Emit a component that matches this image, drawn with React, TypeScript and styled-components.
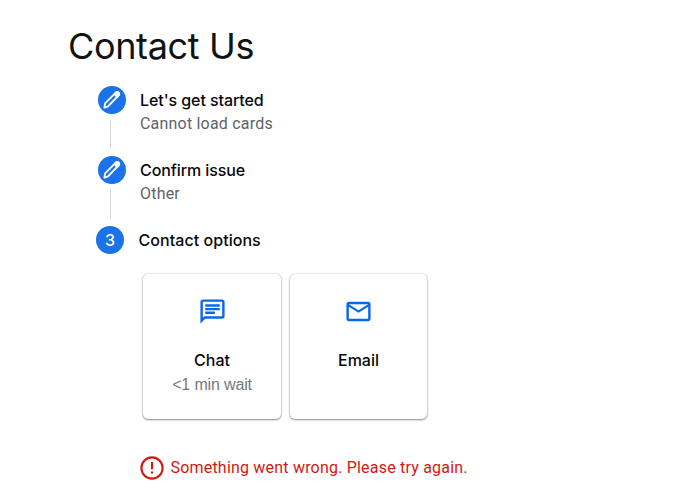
import React from "react";
import styled, { createGlobalStyle } from "styled-components";

const GlobalStyle = createGlobalStyle`
  * { box-sizing: border-box; }
  body { margin: 0; background: #fff; font-family: Roboto, "Liberation Sans", sans-serif; }
`;

const Page = styled.main`
  width: 690px;
  height: 489px;
  padding: 22px 0 0 68px;
  overflow: hidden;
`;

const Title = styled.h1`
  margin: 0;
  height: 64px;
  font: 400 36px/48px Inter, sans-serif;
  letter-spacing: -0.35px;
  color: #111214;
`;

const Steps = styled.ol`
  list-style: none;
  margin: 0;
  padding: 0;
`;

const Step = styled.li<{ $current?: boolean }>`
  display: flex;
  gap: ${(p) => (p.$current ? 14.5 : 14)}px;
  height: ${(p) => (p.$current ? 48 : 70)}px;
  margin-left: ${(p) => (p.$current ? 28 : 30)}px;
`;

const Rail = styled.div`
  display: flex;
  flex-direction: column;
  width: 28px;
`;

const Badge = styled.span`
  display: flex;
  align-items: center;
  justify-content: center;
  width: 28px;
  height: 28px;
  border-radius: 50%;
  background: #1a73e8;
  color: #fff;
  font: 500 16px/28px Inter, sans-serif;
`;

const Connector = styled.span`
  width: 1px;
  height: 28px;
  margin: 6px 0 0 12px;
  background: #d3d5d8;
`;

const Label = styled.div<{ $spacing?: number }>`
  font: 500 16px/24px Inter, sans-serif;
  letter-spacing: ${(p) => p.$spacing ?? 0}px;
  color: #08090a;
  white-space: nowrap;
`;

const StepText = styled.div`
  padding-top: 2px;
`;

const Detail = styled.div<{ $spacing?: number }>`
  font-size: 16px;
  line-height: 23px;
  letter-spacing: ${(p) => p.$spacing ?? 0}px;
  color: #5f6368;
  white-space: nowrap;
`;

const Options = styled.div`
  display: flex;
  gap: 9px;
  margin-left: 75px;
`;

const Card = styled.button<{ $width: number }>`
  display: flex;
  flex-direction: column;
  align-items: center;
  width: ${(p) => p.$width}px;
  height: 145px;
  padding: 23px 0 0;
  border: 0;
  border-radius: 5px;
  background: #fff;
  box-shadow: 0 1px 2px rgba(0, 0, 0, 0.42), 0 0 2px rgba(0, 0, 0, 0.25);

  svg { margin-bottom: 22px; }
`;

const WaitTime = styled.div`
  font: 16px/25px "Liberation Sans", sans-serif;
  letter-spacing: -0.15px;
  color: #75797e;
`;

const ErrorLine = styled.div`
  display: flex;
  align-items: center;
  gap: 6.5px;
  height: 28px;
  margin: 35px 0 0 72px;
  font-size: 16px;
  line-height: 20px;
  letter-spacing: 0.2px;
  color: #d2180f;
`;

const ErrorText = styled.span`
  padding-bottom: 1px;
`;

const PencilIcon = () => (
  <svg width="28" height="28" viewBox="0 0 28 28" fill="none" stroke="#fff" strokeWidth="1.9" strokeLinejoin="round">
    <path d="M6.4 21.6l.7-4.2L17.8 6.7q1.3-1.3 2.7 0 1.4 1.4 0 2.8L10 20.3z" />
    <path d="M16.4 8.1l1.4-1.4q1.3-1.3 2.7 0 1.4 1.4 0 2.8l-1.3 1.4z" fill="#fff" />
  </svg>
);

const ChatIcon = () => (
  <svg width="29" height="29" viewBox="0 0 24 24" fill="#0b66ea">
    <path d="M4 4h16v12H5.17L4 17.17V4m0-2c-1.1 0-1.99.9-1.99 2L2 22l4-4h14c1.1 0 2-.9 2-2V4c0-1.1-.9-2-2-2H4zm2 10h8v2H6v-2zm0-3h12v2H6V9zm0-3h12v2H6V6z" />
  </svg>
);

const MailIcon = () => (
  <svg width="29" height="29" viewBox="0 0 24 24" fill="#0b66ea">
    <path d="M22 6c0-1.1-.9-2-2-2H4c-1.1 0-2 .9-2 2v12c0 1.1.9 2 2 2h16c1.1 0 2-.9 2-2V6zm-2 0-8 5-8-5h16zm0 12H4V8l8 5 8-5v10z" />
  </svg>
);

const AlertIcon = () => (
  <svg width="24" height="24" viewBox="0 0 24 24" fill="none" stroke="#d2180f" strokeWidth="2.1">
    <circle cx="12" cy="12" r="10.6" />
    <path d="M12 6v7.2M12 15.4v2.2" />
  </svg>
);

const completed = [
  { label: "Let's get started", detail: "Cannot load cards", spacing: -0.08, detailSpacing: 0.2 },
  { label: "Confirm issue", detail: "Other", spacing: -0.1, detailSpacing: 0.2 },
];

export default function App() {
  return (
    <Page>
      <GlobalStyle />
      <Title>Contact Us</Title>
      <Steps>
        {completed.map((s) => (
          <Step key={s.label}>
            <Rail>
              <Badge><PencilIcon /></Badge>
              <Connector />
            </Rail>
            <StepText>
              <Label $spacing={s.spacing}>{s.label}</Label>
              <Detail $spacing={s.detailSpacing}>{s.detail}</Detail>
            </StepText>
          </Step>
        ))}
        <Step $current>
          <Rail><Badge>3</Badge></Rail>
          <StepText><Label $spacing={0.05}>Contact options</Label></StepText>
        </Step>
      </Steps>
      <Options>
        <Card $width={138}>
          <ChatIcon />
          <Label>Chat</Label>
          <WaitTime>&lt;1 min wait</WaitTime>
        </Card>
        <Card $width={137}>
          <MailIcon />
          <Label>Email</Label>
        </Card>
      </Options>
      <ErrorLine role="alert">
        <AlertIcon />
        <ErrorText>Something went wrong. Please try again.</ErrorText>
      </ErrorLine>
    </Page>
  );
}
